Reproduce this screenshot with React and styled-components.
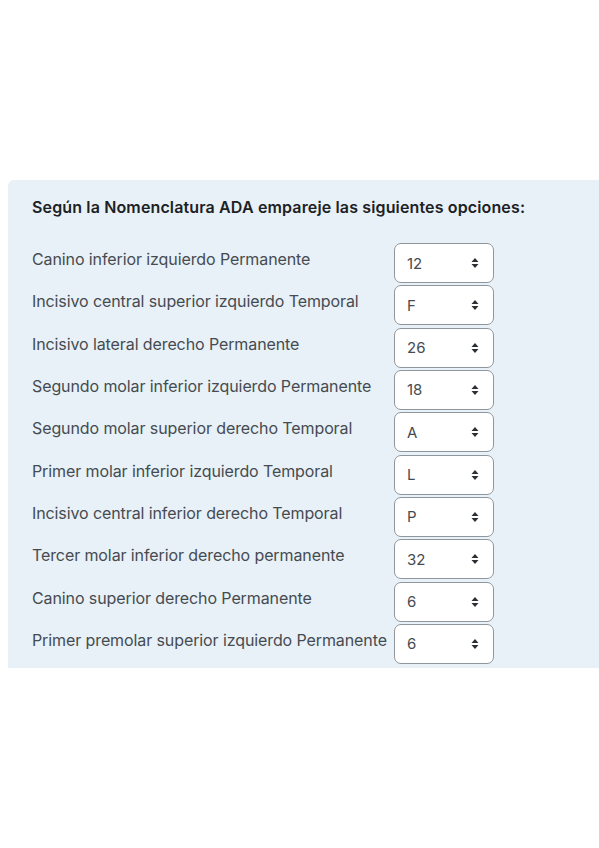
import React from 'react'
import styled, { createGlobalStyle } from 'styled-components'

const GlobalStyle = createGlobalStyle`
  html, body {
    margin: 0;
    padding: 0;
    background: #ffffff;
    font-family: Inter, "Noto Sans", "DejaVu Sans", sans-serif;
  }
`

const rows = [
  ['Canino inferior izquierdo Permanente', '12'],
  ['Incisivo central superior izquierdo Temporal', 'F'],
  ['Incisivo lateral derecho Permanente', '26'],
  ['Segundo molar inferior izquierdo Permanente', '18'],
  ['Segundo molar superior derecho Temporal', 'A'],
  ['Primer molar inferior izquierdo Temporal', 'L'],
  ['Incisivo central inferior derecho Temporal', 'P'],
  ['Tercer molar inferior derecho permanente', '32'],
  ['Canino superior derecho Permanente', '6'],
  ['Primer premolar superior izquierdo Permanente', '6'],
]

const Page = styled.div`
  padding-top: 180px;
  padding-left: 8px;
`

const Panel = styled.section`
  background: #e7f1f7;
  border-top-left-radius: 6px;
  padding: 16px 0 4px 24px;
`

const Heading = styled.h3`
  margin: 0 0 25px;
  font-size: 16px;
  line-height: 22px;
  font-weight: 600;
  color: #1d2125;
  letter-spacing: 0.14px;
`

const Grid = styled.div`
  display: grid;
  grid-template-columns: 362px 100px;
  grid-auto-rows: 40px;
  row-gap: 2.33px;
  align-items: center;
`

const Label = styled.span`
  font-size: 16px;
  color: #464b51;
  letter-spacing: -0.1px;
  white-space: nowrap;
  padding-bottom: 8px;
`

const SelectBox = styled.div`
  position: relative;
  height: 40px;
  box-sizing: border-box;
  border: 1px solid #8f969d;
  border-radius: 7px;
  background: #ffffff;
  display: flex;
  align-items: center;
  padding-left: 12px;
  font-size: 15px;
  color: #464b51;
`

const Arrows = styled.svg`
  position: absolute;
  right: 14px;
  top: 50%;
  transform: translateY(-50%);
`

const Select = ({ value }) => (
  <SelectBox>
    {value}
    <Arrows width="8" height="11" viewBox="0 0 8 11">
      <path d="M4 0.5 L7.5 4.5 H0.5 Z" fill="#2b2f33" />
      <path d="M4 10.5 L7.5 6.5 H0.5 Z" fill="#2b2f33" />
    </Arrows>
  </SelectBox>
)

const App = () => (
  <Page>
    <GlobalStyle />
    <Panel>
      <Heading>Según la Nomenclatura ADA empareje las siguientes opciones:</Heading>
      <Grid>
        {rows.map(([label, value]) => (
          <React.Fragment key={label}>
            <Label>{label}</Label>
            <Select value={value} />
          </React.Fragment>
        ))}
      </Grid>
    </Panel>
  </Page>
)

export default App
